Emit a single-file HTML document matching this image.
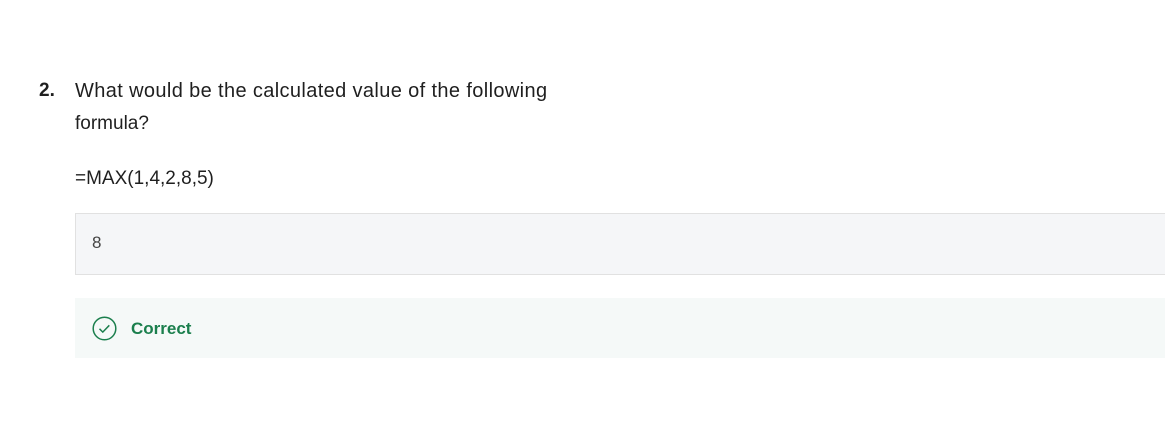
<!DOCTYPE html>
<html><head><meta charset="utf-8"><style>
body{margin:0;width:1165px;height:440px;background:#fff;font-family:"Liberation Sans",sans-serif;color:#1f1f1f;position:relative;overflow:hidden}
.t{position:absolute;font-size:19px;white-space:nowrap}
</style></head><body>
<div class="t" style="left:39px;top:80px;font-weight:bold">2.</div>
<div class="t" style="left:75px;top:80px;font-size:20px;letter-spacing:0.37px">What would be the calculated value of the following</div>
<div class="t" style="left:75px;top:113px;font-size:19px">formula?</div>
<div class="t" style="left:75px;top:168px">=MAX(1,4,2,8,5)</div>
<div style="position:absolute;left:75px;top:213px;width:1092px;height:62px;background:#f5f6f8;border:1px solid #e1e1e1;box-sizing:border-box"></div>
<div class="t" style="left:92px;top:233px;font-size:17px;color:#444">8</div>
<div style="position:absolute;left:75px;top:298px;width:1090px;height:60px;background:#f5f9f8"></div>
<svg style="position:absolute;left:92px;top:316px" width="25" height="25" viewBox="0 0 25 25"><circle cx="12.5" cy="12.5" r="11.3" fill="none" stroke="#1b7f4d" stroke-width="1.5"/><path d="M7.5 12.8l3.3 3.3 6.5-6.8" fill="none" stroke="#1b7f4d" stroke-width="1.5"/></svg>
<div class="t" style="left:131px;top:319px;font-size:17px;font-weight:bold;color:#1b7f4d">Correct</div>
</body></html>
